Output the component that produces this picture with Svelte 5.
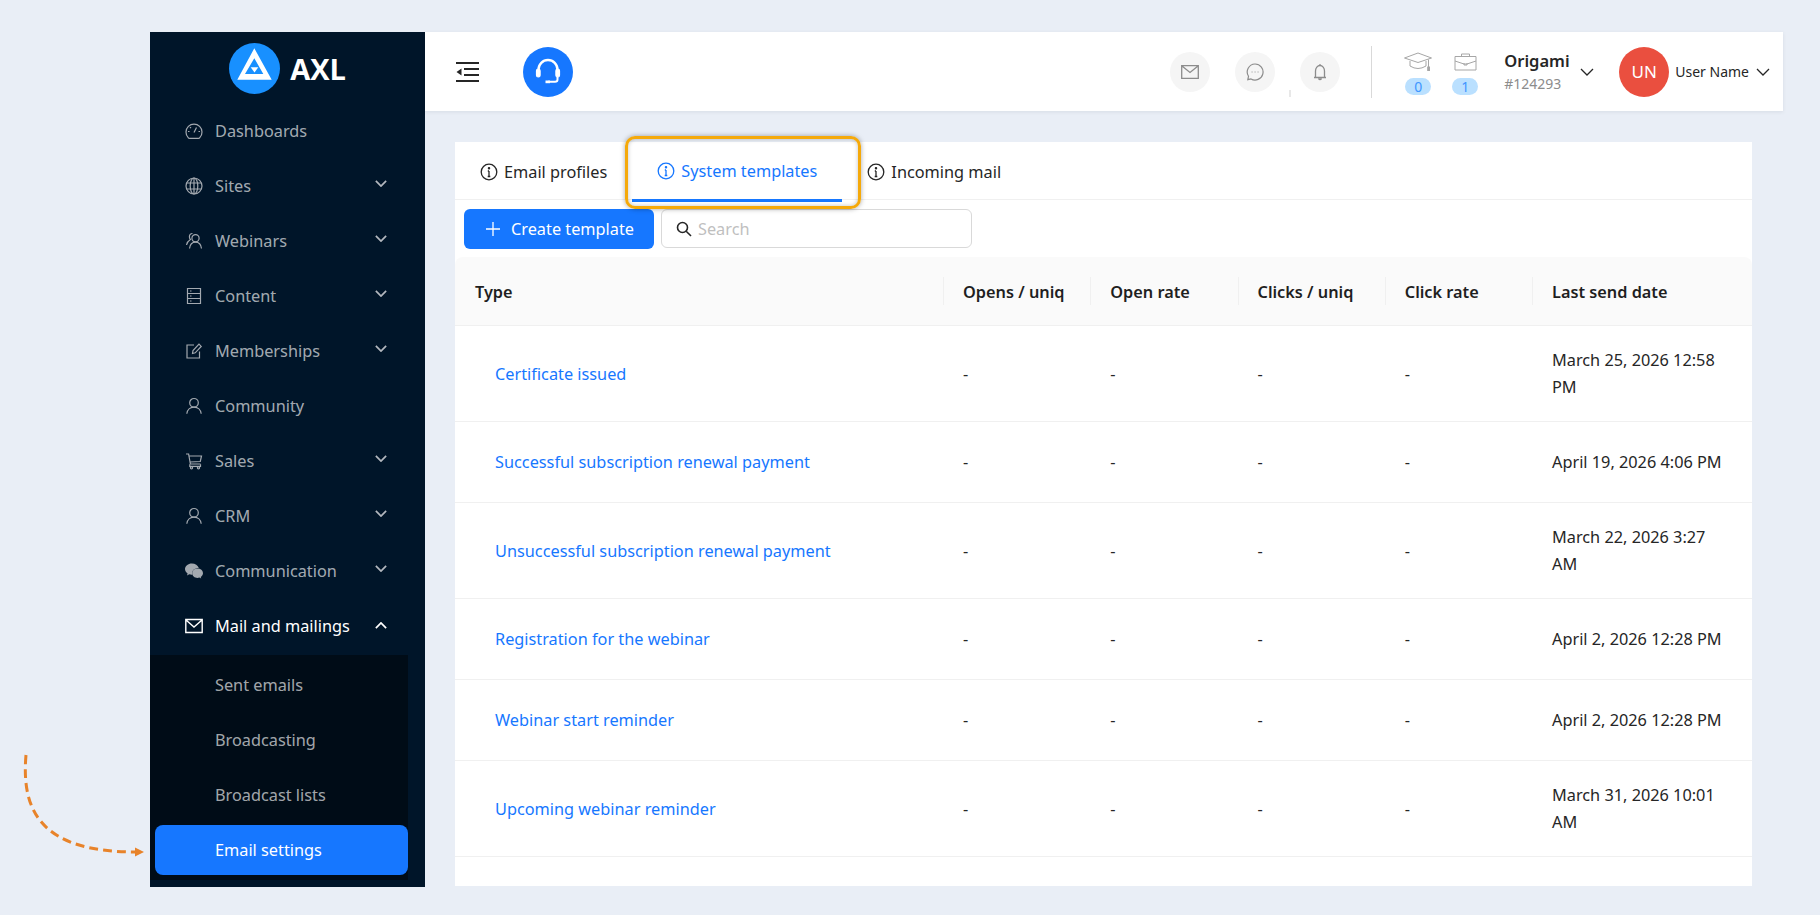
<script>
	const menu = [
		{ label: 'Dashboards', icon: 'dash' },
		{ label: 'Sites', icon: 'globe', arrow: true },
		{ label: 'Webinars', icon: 'people', arrow: true },
		{ label: 'Content', icon: 'content', arrow: true },
		{ label: 'Memberships', icon: 'edit', arrow: true },
		{ label: 'Community', icon: 'user' },
		{ label: 'Sales', icon: 'cart', arrow: true },
		{ label: 'CRM', icon: 'user', arrow: true },
		{ label: 'Communication', icon: 'wechat', arrow: true },
		{ label: 'Mail and mailings', icon: 'mail', arrow: true, open: true }
	];
	const subMenu = ['Sent emails', 'Broadcasting', 'Broadcast lists', 'Email settings'];
	const tabs = ['Email profiles', 'System templates', 'Incoming mail'];
	const columns = ['Type', 'Opens / uniq', 'Open rate', 'Clicks / uniq', 'Click rate', 'Last send date'];
	const rows = [
		{ name: 'Certificate issued', date: 'March 25, 2026 12:58 PM' },
		{ name: 'Successful subscription renewal payment', date: 'April 19, 2026 4:06 PM' },
		{ name: 'Unsuccessful subscription renewal payment', date: 'March 22, 2026 3:27 AM' },
		{ name: 'Registration for the webinar', date: 'April 2, 2026 12:28 PM' },
		{ name: 'Webinar start reminder', date: 'April 2, 2026 12:28 PM' },
		{ name: 'Upcoming webinar reminder', date: 'March 31, 2026 10:01 AM' }
	];
</script>

{#snippet icon(name)}
	<svg class="menu-icon" viewBox="0 0 18 18" fill="none" stroke="currentColor" stroke-width="1.2">
		{#if name === 'dash'}
			<path d="M3.2 15.6A8 8 0 1 1 14.8 15.6Q14.3 16.4 13.4 16.4H4.6Q3.7 16.4 3.2 15.6Z" />
			<path d="M9 10.5 11.5 5.5M3 9.5H4.5M13.5 9.5H15M5 5.2 6 6.2" />
		{:else if name === 'globe'}
			<circle cx="9" cy="9" r="8" />
			<ellipse cx="9" cy="9" rx="3.8" ry="8" />
			<path d="M9 1V17M1.6 6H16.4M1.6 12H16.4" />
		{:else if name === 'people'}
			<circle cx="10.5" cy="6.2" r="3.6" />
			<path d="M4.5 16.5C5 12.5 7.5 10.2 10.5 10.2S16 12.5 16.5 16.5" />
			<path d="M7.5 1.5C5.5 1.5 4.4 3 4.4 4.8 4.4 6 4.8 6.8 5.4 7.4 3.4 8.6 2 10.6 1.5 13" />
		{:else if name === 'content'}
			<path d="M2.5 1.5H15.500V16.500H2.500ZM2.500 6.500H15.500M2.500 11.500H15.500M5 4H6.500M5 9H6.500M5 14H6.500" />
		{:else if name === 'edit'}
			<path d="M14.500 9.500V16H2V3H9" />
			<path d="M7.500 11.500 8 8.500 14 2.200 16.200 4.400 10.200 10.800Z" />
		{:else if name === 'user'}
			<circle cx="9" cy="5.800" r="4.300" />
			<path d="M1.800 16.800C2.200 12.800 5.200 10.200 9 10.200S15.800 12.800 16.200 16.800" />
		{:else if name === 'cart'}
			<path d="M1 2H3.600L5.400 12H15.500M4 4H16.500L15.300 9.500 4.900 10" />
			<path d="M4.800 12.200V14.400H15.500V12.200" />
			<circle cx="6.500" cy="15.800" r="1.100" />
			<circle cx="13.500" cy="15.800" r="1.100" />
		{:else if name === 'wechat'}
			<path fill="currentColor" stroke="none" d="M6.800 1.500C3.100 1.500 0 4 0 7.100c0 1.800 1 3.300 2.600 4.400L2 13.500l2.300-1.200c.8.200 1.600.4 2.500.4h.5a5 5 0 0 1-.2-1.400c0-3 2.800-5.400 6.200-5.400h.5C13 3.500 10.200 1.500 6.800 1.500Z" />
			<path fill="currentColor" stroke="none" d="M18 11.200c0-2.600-2.500-4.700-5.500-4.700S7.200 8.600 7.200 11.200s2.400 4.700 5.300 4.700c.6 0 1.200-.1 1.900-.3l1.800 1-.5-1.700c1.400-1 2.300-2.300 2.300-3.700Z" />
		{:else if name === 'mail'}
			<path d="M.8 2.500H17.200V15.500H.8ZM1 3 9 10 17 3" stroke-width="1.400" />
		{/if}
	</svg>
{/snippet}

{#snippet chevron(cls)}
	<svg class={cls} viewBox="0 0 14 8" fill="none" stroke="currentColor">
		<path d="M1 1 7 7 13 1" />
	</svg>
{/snippet}

{#snippet info()}
	<svg class="info" viewBox="0 0 18 18" fill="none" stroke="currentColor" stroke-width="1.300">
		<circle cx="9" cy="9" r="7.800" />
		<path d="M9 8V13.500M7.700 13.500H10.300M7.800 8H9" />
		<circle cx="9" cy="5.200" r=".6" fill="currentColor" />
	</svg>
{/snippet}

<div class="page">
	<aside class="sidebar">
		<div class="logo">
			<svg class="logo-mark" viewBox="0 0 51 51">
				<circle cx="25.500" cy="25.500" r="25.500" fill="#1890ff" />
				<path fill="#fff" fill-rule="evenodd" d="M25.300 5.300 42.700 36.700H8.300ZM25.300 15.300 16 31H34.300Z" />
				<path fill="#fff" d="M21.700 24.300H29.300L25.500 29.500Z" />
			</svg>
			<span>AXL</span>
		</div>
		<nav class="menu">
			{#each menu as item}
				<div class="menu-item" class:open={item.open}>
					{@render icon(item.icon)}
					<span class="menu-label">{item.label}</span>
					{#if item.arrow}
						{@render chevron(item.open ? 'menu-arrow up' : 'menu-arrow')}
					{/if}
				</div>
			{/each}
			<div class="submenu">
				{#each subMenu as label, i}
					<div class="submenu-item" class:active={i === subMenu.length - 1}>{label}</div>
				{/each}
			</div>
		</nav>
	</aside>

	<main class="main">
		<header class="header">
			<svg class="collapse" viewBox="0 0 23 20" fill="#262626">
				<path d="M0 0H23V2H0ZM8 6H23V8H8ZM8 12H23V14H8ZM0 18H23V20H0ZM5.500 6.500V13.500L.5 10Z" />
			</svg>
			<div class="support">
				<svg viewBox="0 0 30 30" fill="none" stroke="#fff" stroke-width="2.400">
					<path d="M5.500 16V12.500A9.500 9.500 0 0 1 24.500 12.500V16" />
					<rect x="3.500" y="12" width="3.600" height="8" rx="1.800" fill="#fff" stroke-width="1.200" />
					<rect x="22.900" y="12" width="3.600" height="8" rx="1.800" fill="#fff" stroke-width="1.200" />
					<path d="M24.500 20V22.500Q24.500 24.800 22 24.800H15" stroke-width="2" />
					<rect x="12.500" y="23.500" width="4.500" height="2.700" fill="#fff" stroke="none" />
				</svg>
			</div>

			<div class="round-btns">
				<div class="round">
					<svg viewBox="0 0 18 14" fill="none" stroke="#8c8c8c" stroke-width="1.300">
						<path d="M.7.700H17.300V13.300H.7ZM1 1 9 7.500 17 1" />
					</svg>
				</div>
				<div class="round tick">
					<svg viewBox="0 0 18 18" fill="none" stroke="#8c8c8c" stroke-width="1.200">
						<path d="M9 1A8 8 0 1 1 5 15.900L1.800 16.600 2.500 13.300A8 8 0 0 1 9 1Z" />
						<path d="M5.600 9H6.500M8.600 9H9.500M11.600 9H12.500" />
					</svg>
				</div>
				<div class="round">
					<svg viewBox="0 0 14 18" fill="none" stroke="#8c8c8c" stroke-width="1.300">
						<path d="M1 14.500H13M2.500 14.500V8A4.500 5.500 0 0 1 11.500 8V14.500M5.500 15.500Q7 17.500 8.500 15.500M7 1V2.500" />
					</svg>
				</div>
			</div>

			<div class="stats">
				<div class="stat">
					<svg class="grad" viewBox="0 0 28 20" fill="none" stroke="#a6a6a6" stroke-width="1">
						<path d="M14 1 27.500 6 14 10.500 .5 6ZM6 9V14Q14 19 22 14V9M24.500 7.500V15" />
						<rect x="23.700" y="15" width="1.800" height="3.500" fill="#a6a6a6" />
					</svg>
					<span class="badge">0</span>
				</div>
				<div class="stat">
					<svg class="case" viewBox="0 0 23 18" fill="none" stroke="#a6a6a6" stroke-width="1">
						<path d="M1 3.500H22V17H1ZM1 8 10 11H13L22 8M7.500 3.500V1H15.500V3.500M10 10V12H13V10" />
					</svg>
					<span class="badge">1</span>
				</div>
			</div>

			<div class="org">
				<div class="org-name">Origami</div>
				<div class="org-id">#124293</div>
			</div>
			{@render chevron('head-arrow')}
			<div class="avatar">UN</div>
			<span class="user-name">User Name</span>
			{@render chevron('head-arrow')}
		</header>

		<section class="card">
			<div class="tabs">
				{#each tabs as tab, i}
					<div class="tab" class:active={i === 1}>
						{@render info()}
						<span>{tab}</span>
					</div>
				{/each}
				<div class="highlight"></div>
			</div>

			<div class="toolbar">
				<button class="create">
					<svg viewBox="0 0 14 14" stroke="#fff" stroke-width="1.300"><path d="M7 0V14M0 7H14" /></svg>
					Create template
				</button>
				<div class="search">
					<svg viewBox="0 0 16 16" fill="none" stroke="#262626" stroke-width="1.600">
						<circle cx="6.500" cy="6.500" r="5" />
						<path d="M10.200 10.200 15 15" />
					</svg>
					<span>Search</span>
				</div>
			</div>

			<table>
				<colgroup>
					<col class="col-type" />
					<col class="col-num" />
					<col class="col-num" />
					<col class="col-num" />
					<col class="col-num" />
					<col />
				</colgroup>
				<thead>
					<tr>
						{#each columns as col}
							<th>{col}</th>
						{/each}
					</tr>
				</thead>
				<tbody>
					{#each rows as row}
						<tr>
							<td><a href="#top">{row.name}</a></td>
							<td>-</td>
							<td>-</td>
							<td>-</td>
							<td>-</td>
							<td class="date">{row.date}</td>
						</tr>
					{/each}
				</tbody>
			</table>
		</section>
	</main>

	<svg class="arrow" viewBox="0 0 150 110" fill="none">
		<path d="M26 5C21 62 42 102 136 102" stroke="#e8832a" stroke-width="3" stroke-dasharray="9 5" />
		<path d="M135 97.500 144 102 135 106.500Z" fill="#e8832a" />
	</svg>
</div>

<style>
	:global(body) {
		margin: 0;
		background: #e9eef6;
		font-family: "Noto Sans", "Open Sans", sans-serif;
	}

	.page {
		position: relative;
		display: flex;
		box-sizing: border-box;
		height: 915px;
		padding: 32px 37px 28px 150px;
		overflow: hidden;
	}

	.sidebar {
		flex: 0 0 275px;
		background: #001529;
		color: rgba(255, 255, 255, 0.65);
		font-size: 16.3px;
	}

	.logo {
		display: flex;
		align-items: center;
		justify-content: center;
		gap: 10px;
		height: 71px;
		box-sizing: border-box;
		padding-top: 1px;
		color: #fff;
		font-family: "Open Sans", sans-serif;
		font-size: 29px;
		font-weight: 700;
	}

	.logo-mark {
		width: 51px;
		height: 51px;
	}

	.menu-item {
		display: flex;
		align-items: center;
		height: 55px;
		padding: 0 38px 0 35px;
	}

	.menu-item.open {
		color: #fff;
	}

	.menu-icon {
		flex: none;
		width: 18px;
		height: 18px;
		margin-right: 12px;
		color: #a3a9b0;
	}

	.open .menu-icon {
		color: #fff;
	}

	.menu-label {
		flex: 1;
	}

	:global(.menu-arrow) {
		width: 12px;
		height: 7px;
		stroke-width: 2;
		color: #b3b8bf;
		margin-bottom: 4px;
	}

	:global(.menu-arrow.up) {
		color: #fff;
		transform: rotate(180deg);
		margin-bottom: 0;
	}

	.submenu {
		width: 258px;
		margin-top: 2px;
		padding: 5px 0;
		background: #000c17;
	}

	.submenu-item {
		display: flex;
		align-items: center;
		height: 50px;
		margin: 0 0 5px 5px;
		padding-left: 60px;
		border-radius: 8px;
	}

	.submenu-item:last-child {
		margin-bottom: 0;
	}

	.submenu-item.active {
		background: #1677ff;
		color: #fff;
	}

	.main {
		flex: 1;
		display: flex;
		flex-direction: column;
		min-width: 0;
	}

	.header {
		display: flex;
		align-items: center;
		flex: 0 0 79px;
		padding-left: 31px;
		background: #fff;
		box-shadow: 0 1px 4px rgba(0, 21, 41, 0.08);
	}

	.collapse {
		width: 23px;
		height: 20px;
		margin-right: 44px;
	}

	.support {
		display: flex;
		align-items: center;
		justify-content: center;
		width: 50px;
		height: 50px;
		border-radius: 50%;
		background: #1677ff;
	}

	.support svg {
		width: 30px;
		height: 30px;
	}

	.round-btns {
		display: flex;
		gap: 25px;
		margin-left: auto;
		padding-right: 31px;
		border-right: 1px solid #d9d9d9;
		height: 52px;
		align-items: center;
	}

	.round {
		position: relative;
		display: flex;
		align-items: center;
		justify-content: center;
		width: 40px;
		height: 40px;
		border-radius: 50%;
		background: #f5f5f5;
	}

	.round svg {
		width: 18px;
		height: 18px;
	}

	.round.tick::after {
		content: "";
		position: absolute;
		left: 54px;
		top: 38px;
		width: 2px;
		height: 7px;
		background: #e8e8e8;
	}

	.stats {
		display: flex;
		gap: 21px;
		margin-left: 33px;
		margin-right: 26px;
	}

	.stat {
		display: flex;
		flex-direction: column;
		align-items: center;
		width: 26px;
		padding-top: 3px;
	}

	.grad {
		flex: none;
		width: 28px;
		height: 20px;
		margin-bottom: 6px;
	}

	.case {
		flex: none;
		width: 23px;
		height: 18px;
		margin: 1px 0 7px;
	}

	.badge {
		width: 26px;
		height: 17px;
		border-radius: 9px;
		background: #bae0ff;
		color: #4096ff;
		font-size: 14px;
		line-height: 17px;
		text-align: center;
	}

	.org {
		width: 76px;
	}

	.org-name {
		font-size: 16.5px;
		font-weight: 600;
		line-height: 24px;
		color: #262626;
	}

	.org-id {
		font-size: 14px;
		line-height: 22px;
		color: #8c8c8c;
	}

	:global(.head-arrow) {
		width: 14px;
		height: 8px;
		stroke-width: 1.300;
		color: #262626;
	}

	.avatar {
		display: flex;
		align-items: center;
		justify-content: center;
		width: 50px;
		height: 50px;
		margin-left: 25px;
		border-radius: 50%;
		background: #ea4f3f;
		color: #fff;
		font-size: 17px;
	}

	.user-name {
		margin: 0 7px 0 6px;
		font-size: 14px;
		color: #262626;
		white-space: nowrap;
	}

	.header > :global(.head-arrow:last-child) {
		margin-right: 13px;
	}

	.card {
		flex: 1;
		margin: 31px 31px 1px 30px;
		background: #fff;
		color: #262626;
		font-size: 16.3px;
	}

	.tabs {
		position: relative;
		display: flex;
		height: 57px;
		border-bottom: 1px solid #f0f0f0;
	}

	.tab {
		display: flex;
		align-items: center;
		gap: 6px;
		height: 60px;
		box-sizing: border-box;
		padding: 0 25px;
		white-space: nowrap;
	}

	.tab.active {
		color: #1677ff;
		border-bottom: 3px solid #1677ff;
	}

	.info {
		flex: none;
		width: 18px;
		height: 18px;
	}

	.highlight {
		position: absolute;
		left: 170px;
		top: -6px;
		width: 236px;
		height: 73px;
		box-sizing: border-box;
		border: 3px solid #f5a90a;
		border-radius: 10px;
		box-shadow: 0 0 5px rgba(0, 0, 0, 0.35), inset 0 0 4px rgba(0, 0, 0, 0.25);
	}

	.toolbar {
		display: flex;
		gap: 7px;
		padding: 9px 0 8px 9px;
	}

	.create {
		display: flex;
		align-items: center;
		gap: 11px;
		width: 190px;
		height: 40px;
		padding: 0 0 0 22px;
		border: 0;
		border-radius: 6px;
		background: #1677ff;
		color: #fff;
		font: inherit;
	}

	.create svg {
		width: 14px;
		height: 14px;
	}

	.search {
		display: flex;
		align-items: center;
		gap: 6px;
		box-sizing: border-box;
		width: 311px;
		height: 39px;
		padding-left: 14px;
		border: 1px solid #d9d9d9;
		border-radius: 6px;
		color: #bfbfbf;
	}

	.search svg {
		width: 16px;
		height: 16px;
	}

	table {
		width: 100%;
		table-layout: fixed;
		border-collapse: separate;
		border-spacing: 0;
	}

	.col-type {
		width: 488px;
	}

	.col-num {
		width: 147.25px;
	}

	th {
		position: relative;
		height: 69px;
		box-sizing: border-box;
		padding: 1px 20px 0;
		background: #fafafa;
		border-bottom: 1px solid #f0f0f0;
		font-weight: 600;
		text-align: left;
		color: #1f1f1f;
	}

	th:first-child {
		border-top-left-radius: 8px;
	}

	th:last-child {
		border-top-right-radius: 8px;
	}

	th:not(:first-child)::before {
		content: "";
		position: absolute;
		left: 0;
		top: 20px;
		height: 28px;
		width: 1px;
		background: #f0f0f0;
	}

	td {
		padding: 21px 20px 20px;
		border-bottom: 1px solid #f0f0f0;
		line-height: 27px;
	}

	td.date {
		padding-right: 26px;
	}

	td a {
		display: block;
		padding: 6px 0 6px 20px;
		color: #1677ff;
		text-decoration: none;
	}

	.arrow {
		position: absolute;
		left: 0;
		top: 750px;
		width: 150px;
		height: 110px;
	}
</style>
